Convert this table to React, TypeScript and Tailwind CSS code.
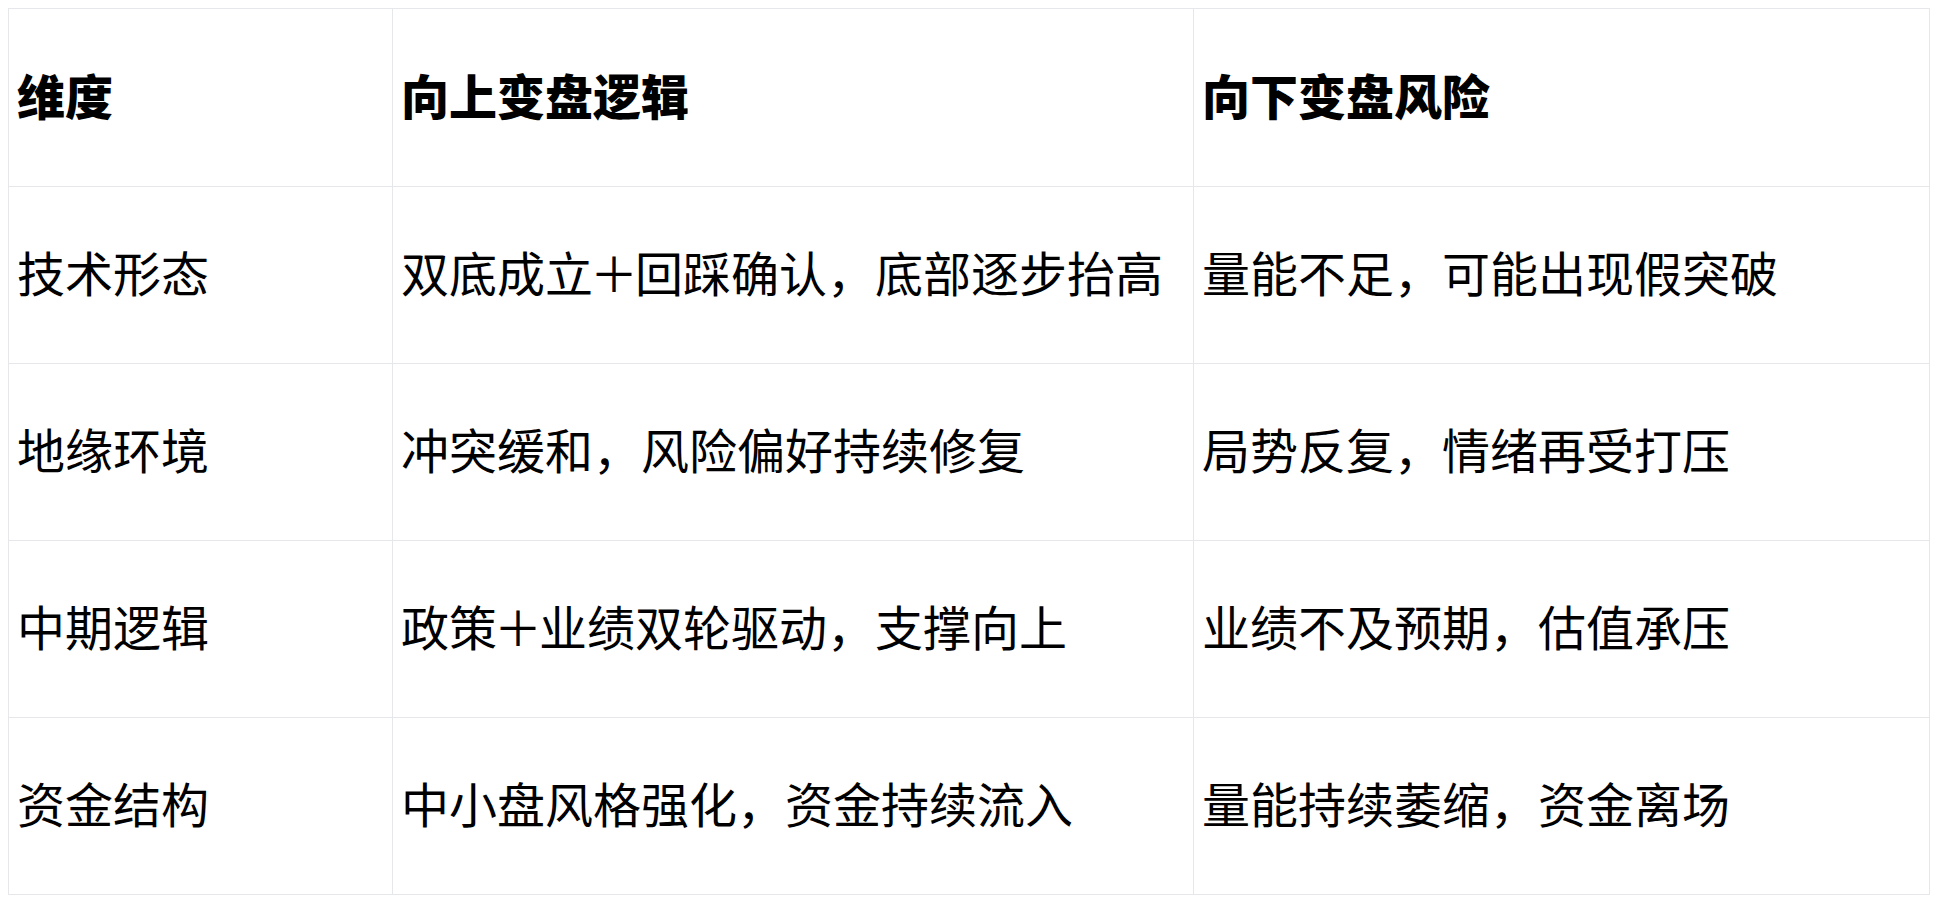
const Plus = () => <span className="-mx-[3px]">＋</span>;

const rows = [
  ["技术形态", <>双底成立<Plus />回踩确认，底部逐步抬高</>, "量能不足，可能出现假突破"],
  ["地缘环境", "冲突缓和，风险偏好持续修复", "局势反复，情绪再受打压"],
  ["中期逻辑", <>政策<Plus />业绩双轮驱动，支撑向上</>, "业绩不及预期，估值承压"],
  ["资金结构", "中小盘风格强化，资金持续流入", "量能持续萎缩，资金离场"],
];

export default function App() {
  return (
    <div
      className="min-h-screen bg-white p-2 text-black"
      style={{ fontFamily: '"Noto Sans CJK SC", "Noto Sans", sans-serif' }}
    >
      <table className="w-[1921px] table-fixed border-collapse text-[48px] leading-none">
        <colgroup>
          <col className="w-[384px]" />
          <col className="w-[801px]" />
          <col className="w-[736px]" />
        </colgroup>
        <thead>
          <tr className="h-[178px]">
            <th className="border border-gray-200 px-2 pb-2 text-left font-black">维度</th>
            <th className="border border-gray-200 px-2 pb-2 text-left font-black">向上变盘逻辑</th>
            <th className="border border-gray-200 px-2 pb-2 text-left font-black">向下变盘风险</th>
          </tr>
        </thead>
        <tbody>
          {rows.map((row, r) => (
            <tr key={r} className="h-[177px]">
              {row.map((cell, i) => (
                <td key={i} className="border border-gray-200 px-2 pb-2 font-normal">
                  {cell}
                </td>
              ))}
            </tr>
          ))}
        </tbody>
      </table>
    </div>
  );
}
